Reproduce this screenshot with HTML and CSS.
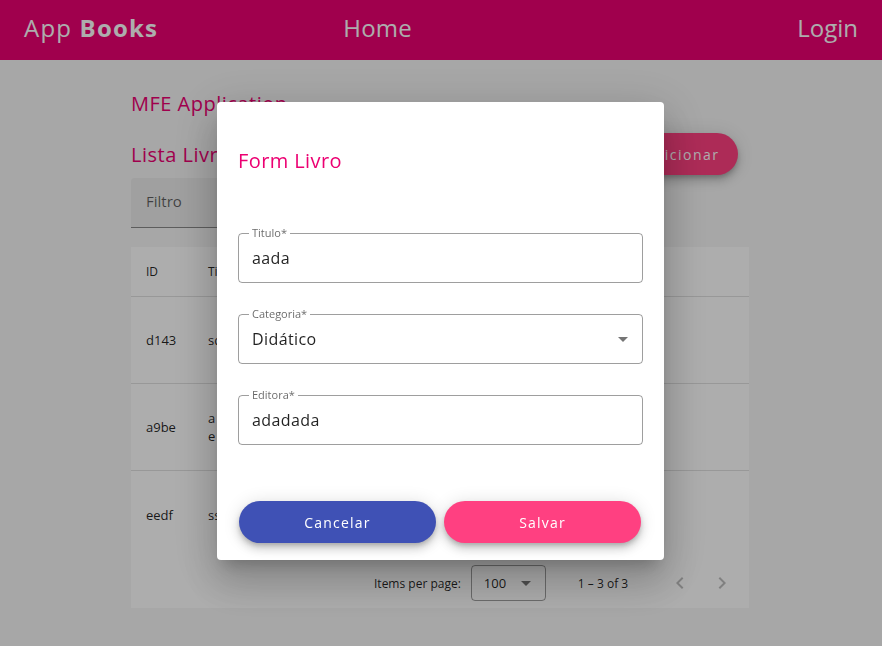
FILE: index.html
```html
<!DOCTYPE html>
<html lang="pt">
<head>
<meta charset="utf-8">
<title>App Books</title>
<link rel="stylesheet" href="styles.css">
</head>
<body>
<header class="toolbar">
  <div class="brand">App <b>Books</b></div>
  <nav class="nav-home">Home</nav>
  <div class="spacer"></div>
  <div class="nav-login">Login</div>
</header>

<main class="content">
  <h1 class="app-title">MFE Application</h1>
  <div class="list-head">
    <h2 class="list-title">Lista Livros</h2>
    <button class="btn btn-add">Adicionar</button>
  </div>
  <div class="filter"><span>Filtro</span></div>

  <section class="table-card">
    <div class="row head"><span class="c-id">ID</span><span class="c-title">Titulo</span></div>
    <div class="row"><span class="c-id">d143</span><span class="c-title">sdsd</span></div>
    <div class="row"><span class="c-id">a9be</span><span class="c-title">a<br>e</span></div>
    <div class="row last"><span class="c-id">eedf</span><span class="c-title">ss</span></div>
    <div class="paginator">
      <span class="pg-label">Items per page:</span>
      <div class="pg-select"><span>100</span><span class="caret"></span></div>
      <span class="pg-range">1 – 3 of 3</span>
      <div class="pg-nav">
        <svg width="24" height="24" viewBox="0 0 24 24"><path d="M15.4 7.4 14 6l-6 6 6 6 1.4-1.4L10.8 12z" fill="rgba(0,0,0,0.26)"/></svg>
        <svg width="24" height="24" viewBox="0 0 24 24"><path d="M10 6 8.6 7.4 13.2 12l-4.6 4.6L10 18l6-6z" fill="rgba(0,0,0,0.26)"/></svg>
      </div>
    </div>
  </section>
</main>

<div class="backdrop"></div>
<div class="dialog">
  <h2 class="dialog-title">Form Livro</h2>
  <div class="form">
    <div class="field">
      <span class="label">Titulo*</span>
      <span class="value">aada</span>
    </div>
    <div class="field">
      <span class="label">Categoria*</span>
      <span class="value">Didático</span>
      <span class="caret"></span>
    </div>
    <div class="field">
      <span class="label">Editora*</span>
      <span class="value">adadada</span>
    </div>
  </div>
  <div class="actions">
    <button class="btn btn-cancel">Cancelar</button>
    <button class="btn btn-save">Salvar</button>
  </div>
</div>
</body>
</html>
```

FILE: styles.css
```css
* { box-sizing: border-box; }
html, body { margin: 0; padding: 0; }
body {
  font-family: "Open Sans", "Noto Sans", sans-serif;
  background: #f6f6f6;
  color: rgba(0,0,0,0.87);
  width: 882px;
  height: 646px;
  overflow: hidden;
}

.toolbar {
  height: 60px;
  background: #ec0072;
  color: #fff;
  display: flex;
  align-items: center;
  padding: 0 24px 6px 24px;
  font-size: 24px;
}
.brand { font-weight: 400; letter-spacing: 1.2px; }
.brand b { font-weight: 700; }
.nav-home { margin-left: 185px; letter-spacing: 0.2px; }
.spacer { flex: 1; }

.content {
  width: 618px;
  margin: 0 0 0 131px;
  padding-top: 30px;
}
.app-title {
  margin: 0;
  font-size: 20px;
  font-weight: 400;
  color: #ec0072;
  line-height: 28px;
  letter-spacing: 0.5px;
}
.list-head {
  display: flex;
  align-items: center;
  justify-content: space-between;
  margin-top: 15px;
  height: 42px;
}
.list-title {
  margin: 0;
  font-size: 20px;
  font-weight: 400;
  color: #ec0072;
  letter-spacing: 0.5px;
}
.btn {
  font-family: inherit;
  border: none;
  border-radius: 21px;
  height: 42px;
  font-size: 14px;
  font-weight: 500;
  letter-spacing: 1.2px;
  color: #fff;
  box-shadow: 0 3px 5px -1px rgba(0,0,0,.2), 0 6px 10px 0 rgba(0,0,0,.14), 0 1px 18px 0 rgba(0,0,0,.12);
}
.btn-add {
  background: #ff4081;
  width: 112px;
  margin-right: 11px;
  letter-spacing: 1.5px;
}

.filter {
  margin-top: 3px;
  width: 300px;
  height: 50px;
  background: #ececec;
  border-bottom: 1px solid rgba(0,0,0,0.42);
  border-radius: 4px 4px 0 0;
  display: flex;
  align-items: center;
  padding: 0 0 3px 15px;
  font-size: 15px;
  color: rgba(0,0,0,0.6);
}

.table-card {
  margin-top: 19px;
  background: #fff;
  height: 361px;
  display: flex;
  flex-direction: column;
}
.row {
  display: flex;
  align-items: center;
  height: 87px;
  border-bottom: 1px solid rgba(0,0,0,0.12);
  font-size: 13px;
  padding-left: 15px;
}
.row.head { height: 50px; font-size: 12px; }
.row.last { border-bottom: none; }
.c-id { width: 62px; }
.c-title { line-height: 18px; }

.paginator {
  display: flex;
  align-items: center;
  height: 50px;
  margin-top: auto;
  font-size: 12px;
  padding-left: 243px;
}
.pg-label { margin-right: 10px; }
.pg-select {
  width: 75px;
  height: 36px;
  border: 1px solid rgba(0,0,0,0.38);
  border-radius: 4px;
  display: flex;
  align-items: center;
  justify-content: space-between;
  padding: 0 14px 0 12px;
  font-size: 13px;
}
.caret {
  width: 0; height: 0;
  border-left: 5px solid transparent;
  border-right: 5px solid transparent;
  border-top: 5px solid rgba(0,0,0,0.54);
}
.pg-range { margin-left: 32px; font-size: 12px; }
.pg-nav { margin-left: 40px; display: flex; gap: 18px; }

.backdrop {
  position: fixed;
  inset: 0;
  background: rgba(0,0,0,0.32);
}
.dialog {
  position: fixed;
  left: 217px;
  top: 102px;
  width: 447px;
  height: 458px;
  background: #fff;
  border-radius: 4px;
  box-shadow: 0 11px 15px -7px rgba(0,0,0,.2), 0 24px 38px 3px rgba(0,0,0,.14), 0 9px 46px 8px rgba(0,0,0,.12);
  padding: 46px 21px 0 21px;
}
.dialog-title {
  margin: 0;
  font-size: 20px;
  font-weight: 400;
  line-height: 26px;
  color: #ec0072;
  letter-spacing: 0.4px;
}
.form {
  margin-top: 59px;
  display: flex;
  flex-direction: column;
  gap: 31px;
}
.field {
  height: 50px;
  border: 1px solid rgba(0,0,0,0.38);
  border-radius: 4px;
  padding: 0 14px 0 13px;
  display: flex;
  align-items: center;
  position: relative;
}
.field .label {
  position: absolute;
  left: 10px;
  top: -8px;
  font-size: 11px;
  line-height: 14px;
  color: rgba(0,0,0,0.6);
  background: #fff;
  padding: 0 3px;
}
.field .value {
  font-size: 16px;
  flex: 1;
  letter-spacing: 0.4px;
  margin-top: -1px;
}

.actions {
  margin-top: 56px;
  display: flex;
  gap: 8px;
  padding: 0 1px 0 1px;
}
.actions .btn { width: 197px; }
.btn-cancel { background: #3f51b5; }
.btn-save { background: #ff4081; }
```
